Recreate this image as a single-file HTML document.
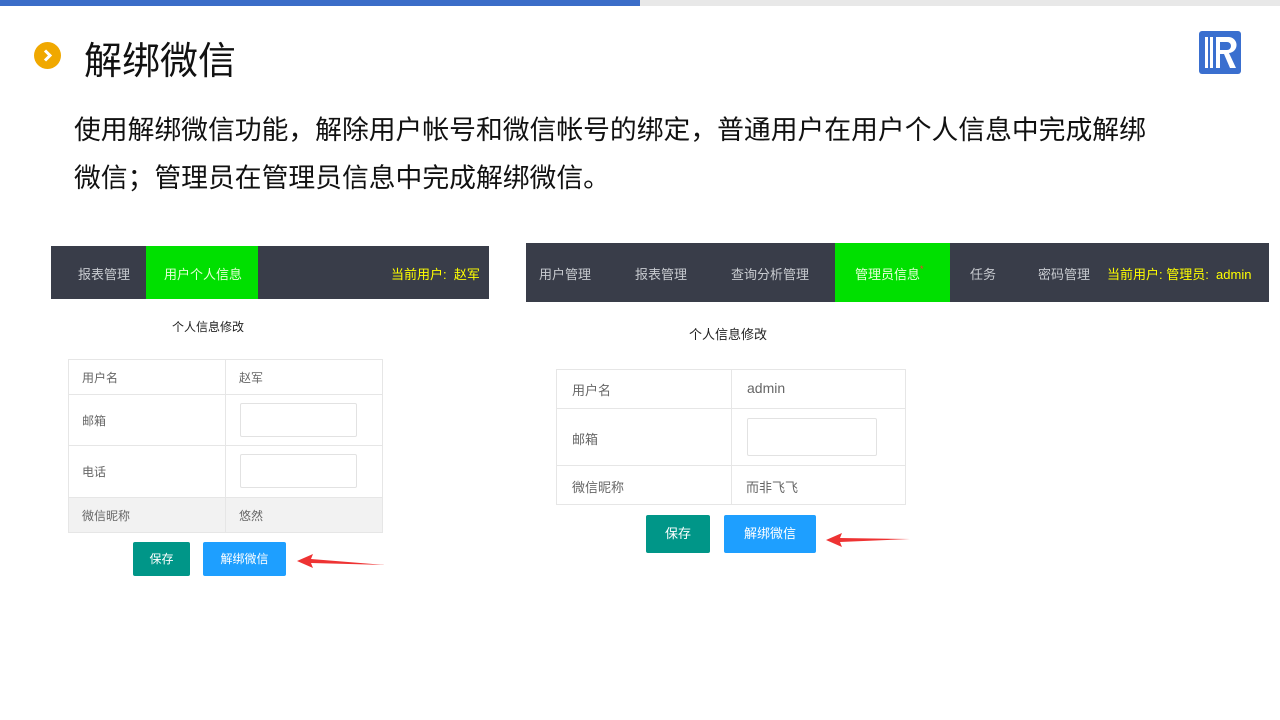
<!DOCTYPE html>
<html><head><meta charset="utf-8"><style>
*{margin:0;padding:0;box-sizing:border-box}
body{width:1280px;height:720px;position:relative;background:#fff;font-family:"Liberation Sans","Noto Sans CJK SC",sans-serif;overflow:hidden}
.a{position:absolute;white-space:nowrap}
.nav{background:#393d49;position:absolute}
.nt{position:absolute;color:#c8cbd0;font-size:13px}
.cell{position:absolute;border:1px solid #e6e6e6}
.lbl{position:absolute;color:#666;font-size:13px}
.inp{position:absolute;border:1px solid #e2e2e2;border-radius:2px;background:#fff}
.btn{position:absolute;color:#fff;font-size:13px;text-align:center;border-radius:2px}
</style></head><body>
<div class="a" style="left:0;top:0;width:640px;height:6px;background:#3b6dc8"></div>
<div class="a" style="left:640px;top:0;width:640px;height:6px;background:#e8e8e8"></div>
<div class="a" style="left:34px;top:42px;width:27px;height:27px;border-radius:50%;background:#f0a800"></div>
<svg class="a" style="left:34px;top:42px" width="27" height="27"><path d="M11 8.5l5 5-5 5" stroke="#fff" stroke-width="3" fill="none"/></svg>
<div class="a" style="left:84px;top:30px;font-size:38px;color:#111">解绑微信</div>
<svg class="a" style="left:1199px;top:31px" width="42" height="44"><rect x="0" y="0" width="42" height="43" rx="3" fill="#3a6fcf"/><rect x="6" y="6" width="3" height="31" fill="#fff"/><rect x="11" y="6" width="3" height="31" fill="#fff"/><path d="M17 6h12a8 8 0 0 1 1 16l7 15h-6l-6-14h-4v14h-4z" fill="#fff"/><path d="M21 11h7a4 4 0 0 1 0 8h-7z" fill="#3a6fcf"/></svg>
<div class="a" style="left:74px;top:106px;font-size:26.8px;color:#111;line-height:48px">使用解绑微信功能，解除用户帐号和微信帐号的绑定，普通用户在用户个人信息中完成解绑<br>微信；管理员在管理员信息中完成解绑微信。</div>

<!-- left -->
<div class="nav" style="left:51px;top:246px;width:438px;height:53px"></div>
<div class="a" style="left:146px;top:246px;width:112px;height:53px;background:#00e000"></div>
<div class="nt" style="left:78px;top:264px">报表管理</div>
<div class="nt" style="left:164px;top:264px;color:#e6ffd8">用户个人信息</div>
<div class="nt" style="left:391px;top:264px;color:#ffff00">当前用户: &nbsp;赵军</div>
<div class="a" style="left:172px;top:318px;font-size:12px;color:#222">个人信息修改</div>
<div class="cell" style="left:68px;top:359px;width:315px;height:174px"></div>
<div class="a" style="left:69px;top:497px;width:313px;height:35px;background:#f2f2f2"></div>
<div class="a" style="left:225px;top:360px;width:1px;height:172px;background:#e6e6e6"></div>
<div class="a" style="left:69px;top:394px;width:313px;height:1px;background:#e6e6e6"></div>
<div class="a" style="left:69px;top:445px;width:313px;height:1px;background:#e6e6e6"></div>
<div class="a" style="left:69px;top:497px;width:313px;height:1px;background:#e6e6e6"></div>
<div class="lbl" style="left:82px;top:369px;font-size:12px">用户名</div>
<div class="lbl" style="left:239px;top:369px;font-size:12px">赵军</div>
<div class="lbl" style="left:82px;top:412px;font-size:12px">邮箱</div>
<div class="inp" style="left:240px;top:403px;width:117px;height:34px"></div>
<div class="lbl" style="left:82px;top:463px;font-size:12px">电话</div>
<div class="inp" style="left:240px;top:454px;width:117px;height:34px"></div>
<div class="lbl" style="left:82px;top:507px;font-size:12px">微信昵称</div>
<div class="lbl" style="left:239px;top:507px;font-size:12px">悠然</div>
<div class="btn" style="left:133px;top:542px;width:57px;height:34px;line-height:34px;background:#009688;font-size:12px">保存</div>
<div class="btn" style="left:203px;top:542px;width:83px;height:34px;line-height:34px;background:#1e9fff;font-size:12px">解绑微信</div>
<svg class="a" style="left:295px;top:553px" width="92" height="18"><path d="M2 8L18 1L16 6L90 12L16 10L18 15Z" fill="#ee3333"/></svg>

<!-- right -->
<div class="nav" style="left:526px;top:243px;width:743px;height:59px"></div>
<div class="a" style="left:835px;top:243px;width:115px;height:59px;background:#00e000"></div>
<div class="nt" style="left:539px;top:264px">用户管理</div>
<div class="nt" style="left:635px;top:264px">报表管理</div>
<div class="nt" style="left:731px;top:264px">查询分析管理</div>
<div class="nt" style="left:855px;top:264px;color:#e6ffd8">管理员信息<span style="color:#f33;font-size:9px;vertical-align:top">*</span></div>
<div class="nt" style="left:970px;top:264px">任务</div>
<div class="nt" style="left:1038px;top:264px">密码管理</div>
<div class="nt" style="left:1107px;top:264px;color:#ffff00">当前用户: 管理员: &nbsp;admin</div>
<div class="a" style="left:689px;top:324px;font-size:13px;color:#222">个人信息修改</div>
<div class="cell" style="left:556px;top:369px;width:350px;height:136px"></div>
<div class="a" style="left:731px;top:370px;width:1px;height:134px;background:#e6e6e6"></div>
<div class="a" style="left:557px;top:408px;width:348px;height:1px;background:#e6e6e6"></div>
<div class="a" style="left:557px;top:465px;width:348px;height:1px;background:#e6e6e6"></div>
<div class="lbl" style="left:572px;top:380px">用户名</div>
<div class="lbl" style="left:747px;top:380px;font-size:14px">admin</div>
<div class="lbl" style="left:572px;top:429px">邮箱</div>
<div class="inp" style="left:747px;top:418px;width:130px;height:38px"></div>
<div class="lbl" style="left:572px;top:477px">微信昵称</div>
<div class="lbl" style="left:746px;top:477px">而非飞飞</div>
<div class="btn" style="left:646px;top:515px;width:64px;height:38px;line-height:38px;background:#009688">保存</div>
<div class="btn" style="left:724px;top:515px;width:92px;height:38px;line-height:38px;background:#1e9fff">解绑微信</div>
<svg class="a" style="left:824px;top:531px" width="88" height="18"><path d="M2 9L18 2L16 7L86 8L16 11L18 16Z" fill="#ee3333"/></svg>
</body></html>
